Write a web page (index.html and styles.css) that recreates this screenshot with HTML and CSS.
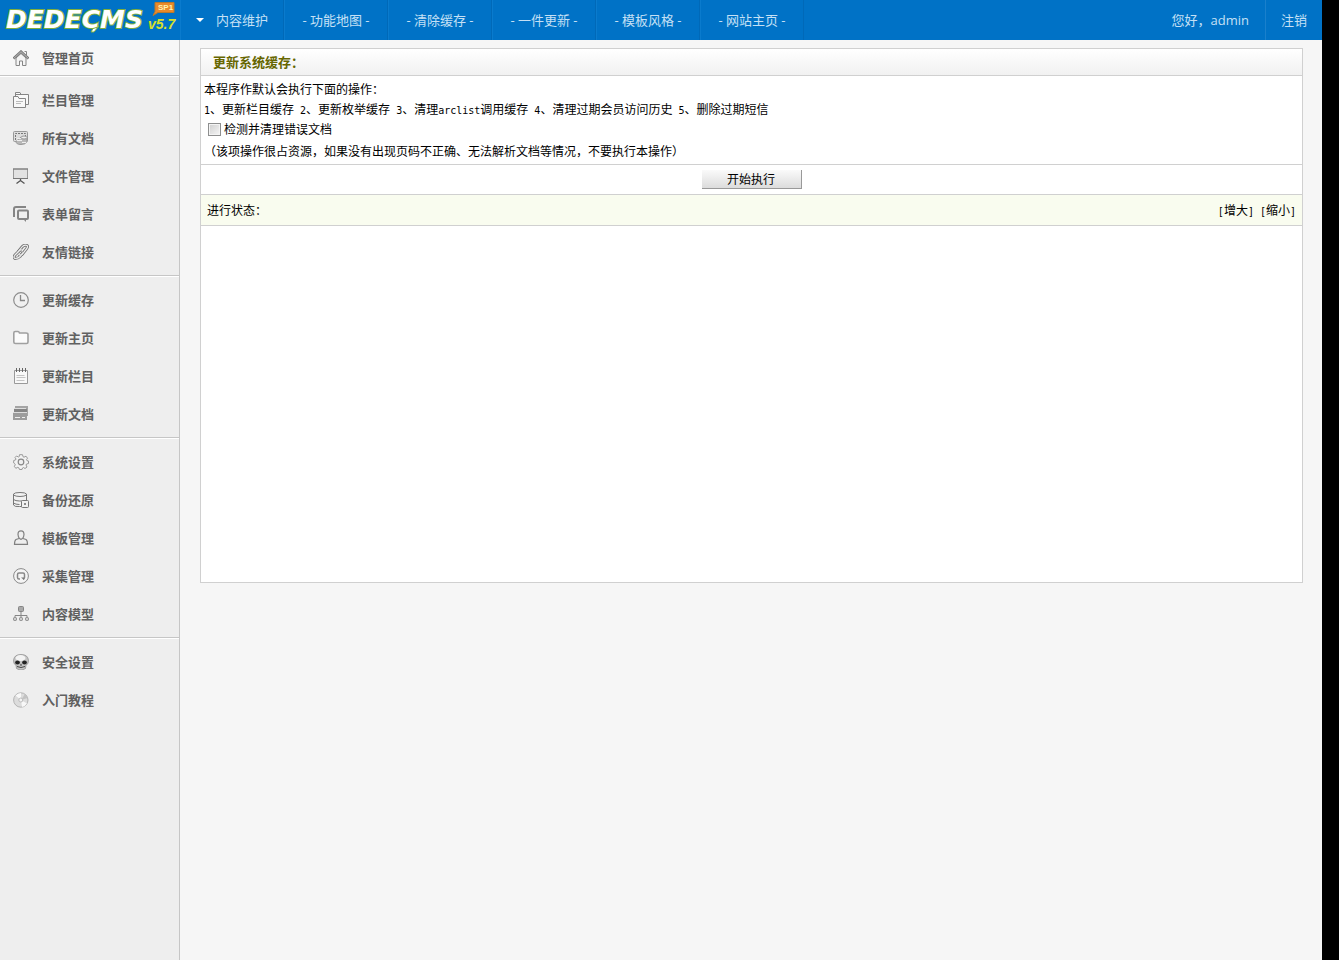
FILE: index.html
```html
<!DOCTYPE html>
<html lang="zh-CN">
<head>
<meta charset="utf-8">
<title>DedeCMS</title>
<link rel="stylesheet" href="styles.css">
</head>
<body>
<div class="app">
<header class="topbar">
  <a class="logo" href="#" aria-label="DedeCMS v5.7 SP1">
    <svg width="180" height="40" viewBox="0 0 180 40">
      <path d="M91 32l4-7 4 1-5 6z" fill="#fff" stroke="#7fae3c"/>
      <text class="logo-name" x="6" y="28">DEDECMS</text>
      <text class="logo-version" x="148" y="29">v5.7</text>
      <path d="M155 2.500h19v10h-16l-5 3 2-4z" fill="#e98a2a" stroke="#b8792c"/>
      <text class="logo-badge" x="158" y="10">SP1</text>
    </svg>
  </a>
  <nav class="topnav">
    <a class="topnav-item has-menu" href="#"><span class="caret"></span>内容维护</a>
    <a class="topnav-item" href="#">- 功能地图 -</a>
    <a class="topnav-item" href="#">- 清除缓存 -</a>
    <a class="topnav-item" href="#">- 一件更新 -</a>
    <a class="topnav-item" href="#">- 模板风格 -</a>
    <a class="topnav-item" href="#">- 网站主页 -</a>
  </nav>
  <div class="account">
    <span class="account-item">您好，admin</span>
    <a class="account-item logout" href="#">注销</a>
  </div>
</header>
<div class="columns">
<aside class="sidebar">
  <nav class="group home">
    <a class="item" href="#"><svg class="icon" viewBox="0 0 16 16"><path d="M3 8v7.500h3.500V11h3v4.500H13V8L8 3.500z" fill="#f4f4f4" stroke="#858585"/><path d="M.5 8.500L8 1.500l7.500 7" fill="none" stroke="#777" stroke-width="2.400"/><path d="M1 8.200L8 1.700l7 6.500" fill="none" stroke="#ccc" stroke-width=".8"/><path d="M11.500 1.500h2v4" fill="none" stroke="#888"/></svg>管理首页</a>
  </nav>
  <nav class="group">
    <a class="item" href="#"><svg class="icon" viewBox="0 0 16 16" fill="#f8f8f8" stroke="#858585"><path d="M2.500 4.500v-4H7l1 2h7.500v10H13"/><path d="M3 2.500h5" /><path d="M.5 15.500v-11H5l1 2h6.500v9z"/><path d="M3 9.500h7M3 11.500h5" stroke="#bbb"/></svg>栏目管理</a>
    <a class="item" href="#"><svg class="icon" viewBox="0 0 16 16"><rect x=".5" y="1.500" width="14" height="10" rx="1" fill="#ddd" stroke="#999"/><path d="M2.500 10V3.500h10V7" fill="none" stroke="#777" stroke-dasharray="2 1"/><path d="M3 11.500q0 3 5 3t6-3V8q-3 2-6-1z" fill="#b8b8b8" stroke="#999"/><ellipse cx="11" cy="7.500" rx="3" ry="1.500" fill="#eee" stroke="#999"/><path d="M4 8.500h4M4 10.500h5M9 12.500h4" stroke="#eee"/></svg>所有文档</a>
    <a class="item" href="#"><svg class="icon" viewBox="0 0 16 16"><rect x=".5" y="1" width="14" height="9.500" fill="#e2e2e2" stroke="#999"/><path d="M0 1h15M0 10.500h15" stroke="#777" stroke-width="1.200"/><path d="M7.500 11v2M3.500 15.500l4-3 4 3" fill="none" stroke="#555" stroke-width="1.300"/></svg>文件管理</a>
    <a class="item" href="#"><svg class="icon" viewBox="0 0 16 16" fill="none" stroke="#858585" stroke-width="2"><path d="M1 11V3q0-2 2-2h9v1"/><rect x="5" y="4.500" width="10" height="8.500" rx="1" fill="#eee"/><path d="M10 13h3v3z" fill="#858585" stroke="none"/></svg>表单留言</a>
    <a class="item" href="#"><svg class="icon" viewBox="0 0 16 16" fill="none"><g stroke="#777" stroke-width="3"><path d="M5 8l4-5q2-2.500 5-1.500 1.500 1-1 4l-4 5q-2 1-3 0"/><path d="M9 6Q7 5.500 6 7l-4 4q-2 2.500 0 3.500 3 0 5-2l3-4"/></g><g stroke="#eee" stroke-width="1.200"><path d="M5 8l4-5q2-2.500 5-1.500 1.500 1-1 4l-4 5q-2 1-3 0"/><path d="M9 6Q7 5.500 6 7l-4 4q-2 2.500 0 3.500 3 0 5-2l3-4"/></g></svg>友情链接</a>
  </nav>
  <nav class="group">
    <a class="item" href="#"><svg class="icon" viewBox="0 0 16 16"><circle cx="8" cy="8" r="7.300" fill="#f0f0f0" stroke="#8c8c8c" stroke-width="1.200"/><path d="M7.500 3v5.500H12" fill="none" stroke="#888" stroke-width="1.300"/></svg>更新缓存</a>
    <a class="item" href="#"><svg class="icon" viewBox="0 0 16 16"><path d="M.8 12V3q0-1.500 1.500-1.500H5q1 0 1.500 1.500H13q2 0 2 1.500V12q0 1.500-1.500 1.500h-11Q.8 13.500.8 12z" fill="#fbfbfb" stroke="#a0a0a0" stroke-width="1.600"/></svg>更新主页</a>
    <a class="item" href="#"><svg class="icon" viewBox="0 0 16 16"><path d="M1.500 2.500h13v13h-13z" fill="#f8f8f8" stroke="#999"/><path d="M3.500 0v4M6.500 0v4M9.500 0v4M12.500 0v4" stroke="#666"/><path d="M3.500 7.500h8M3.500 9.500h9M3.500 12.500h8" stroke="#c4c4c4"/></svg>更新栏目</a>
    <a class="item" href="#"><svg class="icon" viewBox="0 0 16 16"><path d="M2 0h13v10h-2V3H2z" fill="#a4a4a4"/><path d="M1 3h13v3H1z" fill="#858585"/><path d="M0 7h14v7H0z" fill="#9c9c9c"/><path d="M1 2.500h12M0 6.500h14" stroke="#ddd"/><path d="M2 11.500h5M9 11.500h3" stroke="#eee"/></svg>更新文档</a>
  </nav>
  <nav class="group">
    <a class="item" href="#"><svg class="icon" viewBox="0 0 16 16"><path d="M6.500.7h3l.5 2 1 .5 2-1 1.500 2-1 1.500.5 1 1.500.3v2.500l-2 .5-.5 1 1 2-2 1.500-1.500-1-1 .5-.5 1.500h-2.500l-.7-1.700-1-.5-2 1-1.500-2 1-1.500-.5-1L.7 9V6.500l1.800-.5.5-1-1-1.500L3.500 2l2 1 .7-.4z" fill="#f2f2f2" stroke="#999"/><circle cx="8" cy="8" r="2.800" fill="#eee" stroke="#888" stroke-width="1.200"/></svg>系统设置</a>
    <a class="item" href="#"><svg class="icon" viewBox="0 0 16 16" fill="#f1f1f1" stroke="#777"><path d="M.5 2v11q1 2 6 1.500h7V2q-1-1.500-6.500-1.500T.5 2z"/><path d="M.5 3q2 1.500 6.500 1.500T13.500 3M.5 7.500q2 1.500 6 1.500h7M.5 11q2 1.500 6 1.500" fill="none"/><rect x="8.500" y="8.500" width="7" height="7" rx="1"/><path d="M11.500 11.500h1v1h-1z" fill="#555"/></svg>备份还原</a>
    <a class="item" href="#"><svg class="icon" viewBox="0 0 16 16" fill="#eee" stroke="#808080" stroke-width="1.200"><path d="M6 8.500l-3 1Q1.500 10.500 1.500 14.400h13q0-3.900-1.500-4.900l-3-1"/><path d="M8 .8q3 0 3 3.700Q10.500 8.800 8 9.300 5.500 8.800 5 4.500 5 .8 8 .8z"/></svg>模板管理</a>
    <a class="item" href="#"><svg class="icon" viewBox="0 0 16 16"><circle cx="8" cy="8" r="7.400" fill="#f4f4f4" stroke="#8a8a8a"/><path d="M7 11H6q-1.500 0-1.500-1.500v-3Q4.500 5 6 5h4q1.500 0 1.500 1.500v3q0 1.500-1.500 1.500" fill="none" stroke="#888" stroke-width="1.500"/><path d="M8 9.500h3V12z" fill="#777"/></svg>采集管理</a>
    <a class="item" href="#"><svg class="icon" viewBox="0 0 16 16" fill="#ccc" stroke="#858585"><path d="M8 6v5M2 11V9.500h12V11" fill="none"/><rect x="5.500" y=".5" width="5" height="5" rx="1" fill="#aaa"/><rect x=".5" y="11.500" width="3" height="3" rx="1"/><rect x="6.500" y="11.500" width="3" height="3" rx="1"/><rect x="12.500" y="11.500" width="3" height="3" rx="1"/></svg>内容模型</a>
  </nav>
  <nav class="group last">
    <a class="item" href="#"><svg class="icon" viewBox="0 0 16 16"><path d="M8 .5q7 0 7.500 6 0 4-2.500 4.500l-.5 3.500Q10 16 8 16t-4.500-1.500L3 11Q.5 10.500.5 6.500 1 .5 8 .5z" fill="#c4c4c4" stroke="#888" stroke-width=".7"/><ellipse cx="7.500" cy="4" rx="5" ry="3" fill="#f3f3f3"/><ellipse cx="4.500" cy="8.500" rx="2.400" ry="2" fill="#222"/><ellipse cx="11.500" cy="8.500" rx="2.400" ry="2" fill="#222"/><path d="M8 9.500l1 2H7z" fill="#333"/><path d="M4 12.500q4 2 8 0" fill="none" stroke="#444"/></svg>安全设置</a>
    <a class="item" href="#"><svg class="icon" viewBox="0 0 16 16"><circle cx="7.800" cy="8" r="7.200" fill="#dcdcdc" stroke="#b4b4b4"/><path d="M8 8L2.500 3.500Q5 1 8 1zM8 8l6 3.500Q12 14.500 9 15z" fill="#f8f8f8"/><path d="M8 8l4-6q2 2 2.500 4z" fill="#c2c2c2"/><circle cx="7.800" cy="8" r="2" fill="#f4f4f4" stroke="#bbb"/></svg>入门教程</a>
  </nav>
</aside>
<main class="main">
  <form class="panel">
    <h1 class="panel-title">更新系统缓存：</h1>
    <div class="intro">
      <p>本程序作默认会执行下面的操作：</p>
      <p><span class="half">1</span>、更新栏目缓存<span class="half"> 2</span>、更新枚举缓存<span class="half"> 3</span>、清理<span class="half">arclist</span>调用缓存<span class="half"> 4</span>、清理过期会员访问历史<span class="half"> 5</span>、删除过期短信</p>
      <label class="check"><input type="checkbox">检测并清理错误文档</label>
      <p>（该项操作很占资源，如果没有出现页码不正确、无法解析文档等情况，不要执行本操作）</p>
    </div>
    <div class="actions"><button class="run" type="button">开始执行</button></div>
    <div class="status">
      <span>进行状态：</span>
      <span class="resize"><a href="#"><span class="half">[</span>增大<span class="half">]</span></a><a href="#"><span class="half">[</span>缩小<span class="half">]</span></a></span>
    </div>
    <div class="output"></div>
  </form>
</main>
</div>
</div>
</body>
</html>
```
FILE: styles.css
```css
* { box-sizing: border-box; }
body {
  margin: 0;
  padding-right: 17px;
  background: #000;
  font: 13px/20px "Open Sans", "Noto Sans CJK SC", sans-serif;
}
a { color: inherit; text-decoration: none; }
p { margin: 0; }
.app {
  display: flex;
  flex-direction: column;
  min-height: 100vh;
  background: #f6f6f6;
}
.topbar {
  display: flex;
  height: 40px;
  background: #0072c6;
  color: #c5e0f5;
  line-height: 40px;
}
.logo, .logo svg { display: block; }
.logo-name {
  font: italic bold 25px "DejaVu Sans", sans-serif;
  fill: #fff;
  stroke: #7fae3c;
  stroke-width: 2px;
  paint-order: stroke;
}
.logo-version {
  font: italic bold 14px "Liberation Sans", sans-serif;
  fill: #d6e02c;
}
.logo-badge {
  font: bold 8px "Liberation Sans", sans-serif;
  fill: #fff3b0;
}
.topnav { display: flex; }
.topnav-item {
  width: 104px;
  border-left: 1px solid #0a7bcd;
  border-right: 1px solid #0069b8;
  text-align: center;
}
.has-menu {
  display: flex;
  align-items: center;
  gap: 12px;
  padding-left: 15px;
}
.caret {
  border: 4px solid transparent;
  border-top-color: #fff;
  border-bottom: 0;
}
.account { display: flex; margin-left: auto; }
.account-item { padding: 0 16px; }
.logout { border-left: 1px solid #1a80cc; padding: 0 15px; }
.columns { display: flex; flex: 1; }
.sidebar {
  flex: 0 0 180px;
  background: #eee;
  border-right: 1px solid #c6c6c6;
  color: #606060;
  font-weight: bold;
}
.group {
  padding: 4px 0;
  border-top: 1px solid #fff;
  border-bottom: 1px solid #c6c6c6;
}
.home { padding: 0; border-top: 0; background: #f7f7f7; }
.last { border-bottom: 0; }
.item {
  display: flex;
  align-items: center;
  gap: 13px;
  height: 38px;
  padding-left: 13px;
}
.home .item { height: 35px; }
.icon { width: 16px; height: 16px; }
.main {
  flex: 1;
  padding: 8px 19px 8px 20px;
  color: #000;
  font-family: "Noto Sans CJK SC", sans-serif;
  font-size: 12px;
}
.panel { border: 1px solid #d0d0d0; background: #fff; }
.panel-title {
  margin: 0;
  padding: 0 12px;
  background: linear-gradient(#fff, #f1f1f1);
  color: #666600;
  font-size: 13px;
  line-height: 26px;
}
.intro {
  padding: 3px;
  border-top: 1px solid #d0d0d0;
}
.half {
  font-family: "DejaVu Sans Mono", monospace;
  font-size: 10px;
  line-height: 1;
  white-space: pre;
}
.check {
  display: flex;
  align-items: center;
  margin-bottom: 2px;
}
.check input {
  appearance: none;
  width: 13px;
  height: 13px;
  margin: 0 3px 0 4px;
  border: 1px solid #8e8f8f;
  background: linear-gradient(135deg, #cfcfcf, #f6f6f6);
  box-shadow: inset 0 0 0 1px #f4f4f4;
}
.actions {
  display: flex;
  justify-content: center;
  padding: 5px;
  border-top: 1px solid #d0d0d0;
}
.run {
  width: 100px;
  height: 19px;
  padding: 0;
  border: 0;
  border-right: 1px solid #999;
  border-bottom: 1px solid #999;
  background: linear-gradient(#fafafa, #dcdcdc);
  color: #000;
  font: 12px/18px "Noto Sans CJK SC", sans-serif;
}
.status {
  display: flex;
  justify-content: space-between;
  padding: 5px 6px;
  border: 1px solid #d0d0d0;
  border-width: 1px 0;
  background: #f9fcef;
}
.resize { display: flex; gap: 6px; }
.output { min-height: 356px; }
```
